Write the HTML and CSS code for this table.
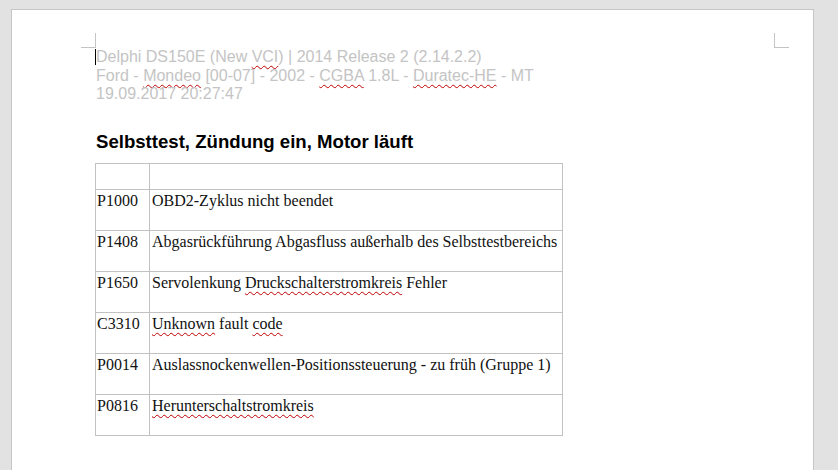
FILE: index.html
```html
<!DOCTYPE html>
<html lang="de">
<head>
<meta charset="utf-8">
<title>Dokument</title>
<link rel="stylesheet" href="styles.css">
</head>
<body>
<div class="page">
  <span class="mark mark-left"></span>
  <span class="mark mark-right"></span>
  <div class="header">
    <p class="hline"><span class="cursor"></span>Delphi DS150E (New <span class="sp">VCI</span>) | 2014 Release 2 (2.14.2.2)</p>
    <p class="hline">Ford - <span class="sp">Mondeo</span> [00-07] - 2002 - <span class="sp">CGBA</span> 1.8L - <span class="sp">Duratec-HE</span> - MT</p>
    <p class="hline">19.09.2017 20:27:47</p>
  </div>
  <h1 class="title">Selbsttest, Zündung ein, Motor läuft</h1>
  <table class="codes">
    <tr class="head"><td class="c1"></td><td class="c2"></td></tr>
    <tr><td class="c1">P1000</td><td class="c2">OBD2-Zyklus nicht beendet</td></tr>
    <tr><td class="c1">P1408</td><td class="c2">Abgasrückführung Abgasfluss außerhalb des Selbsttestbereichs</td></tr>
    <tr><td class="c1">P1650</td><td class="c2">Servolenkung <span class="sp">Druckschalterstromkreis</span> Fehler</td></tr>
    <tr><td class="c1">C3310</td><td class="c2"><span class="sp">Unknown</span> fault <span class="sp">code</span></td></tr>
    <tr><td class="c1">P0014</td><td class="c2">Auslassnockenwellen-Positionssteuerung - zu früh (Gruppe 1)</td></tr>
    <tr><td class="c1">P0816</td><td class="c2"><span class="sp">Herunterschaltstromkreis</span></td></tr>
  </table>
</div>
</body>
</html>
```

FILE: styles.css
```css
html, body {
  margin: 0;
  padding: 0;
}
body {
  background: #e2e2e2;
  padding: 9px 0 0 11px;
  height: 470px;
  box-sizing: border-box;
  overflow: hidden;
}
.page {
  position: relative;
  width: 803px;
  height: 600px;
  background: #ffffff;
  border: 1px solid #c6c6c6;
  box-sizing: border-box;
  padding: 38px 0 0 84px;
}
.mark {
  position: absolute;
  width: 14px;
  height: 14px;
  border-color: #c4c4c4;
  border-style: solid;
}
.mark-left {
  left: 69px;
  top: 23px;
  border-width: 0 1px 1px 0;
}
.mark-right {
  left: 762px;
  top: 23px;
  border-width: 0 0 1px 1px;
}
.header {
  font-family: "Liberation Sans", Arial, sans-serif;
  font-size: 16px;
  color: #c4c4c4;
}
.hline {
  margin: 0;
  line-height: 18.5px;
  white-space: nowrap;
}
.cursor {
  display: inline-block;
  width: 1px;
  height: 16px;
  background: #000;
  vertical-align: -3px;
  margin-left: -1px;
}
.sp {
  text-decoration: underline wavy #c00000;
  text-decoration-thickness: 1px;
  text-underline-offset: 3px;
}
.title {
  font-family: "Liberation Sans", Arial, sans-serif;
  font-size: 18.6px;
  font-weight: bold;
  color: #000;
  margin: 27px 0 10px 0;
  line-height: 22px;
}
.codes {
  border-collapse: collapse;
  margin-left: -1px;
  width: 468px;
  font-family: "Liberation Serif", "Times New Roman", serif;
  font-size: 16px;
  color: #111;
}
.codes td {
  border: 1px solid #c2c2c2;
  vertical-align: top;
  height: 41px;
  box-sizing: border-box;
  padding: 2px 2px 0 2px;
  line-height: 18.4px;
  white-space: nowrap;
}
.codes .head td {
  height: 26px;
}
.codes .c1 {
  width: 54px;
  padding-left: 1px;
}
```
